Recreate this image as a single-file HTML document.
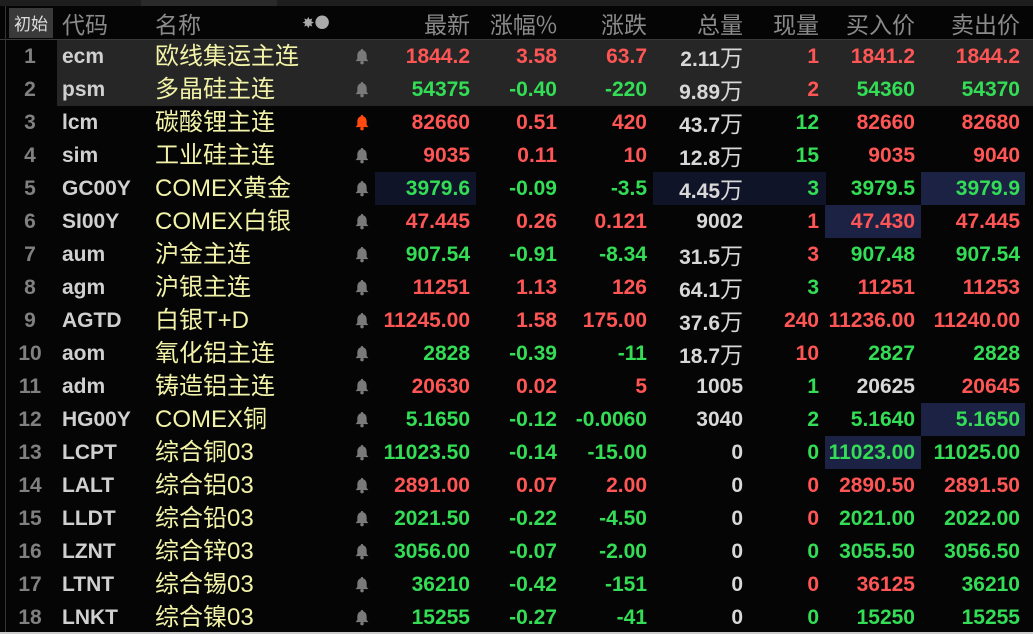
<!DOCTYPE html><html><head><meta charset="utf-8"><style>
body{margin:0;width:1033px;height:634px;background:#050505;overflow:hidden;position:relative;font-family:"Liberation Sans","Noto Sans CJK SC",sans-serif}
.a{position:absolute;white-space:nowrap;line-height:33px;height:33px}
.h{position:absolute;top:7px;height:32px;line-height:32px;font-size:23px;color:#8a8a8a;font-family:"Noto Sans CJK SC",sans-serif}
.n{font-size:21px;font-weight:bold;text-align:right}
.r{color:#ff5555}.g{color:#33dd55}.w{color:#d8d8d8}
.hl{position:absolute;background:#0f1428}
.hl2{position:absolute;background:#1b2244}
.bell{position:absolute;width:14px;height:17px}
</style></head><body>
<div style="position:absolute;left:0;top:0;width:1033px;height:6px;background:#1e1e1e"></div>
<div style="position:absolute;left:141px;top:0;width:136px;height:6px;background:#2a2a2a"></div>
<div style="position:absolute;left:0;top:39px;width:1033px;height:1px;background:#3a3a3a"></div>
<div style="position:absolute;left:5px;top:6px;width:1px;height:628px;background:#333"></div>
<div style="position:absolute;left:0;top:632px;width:1033px;height:2px;background:#ccc"></div>
<div style="position:absolute;left:9px;top:8px;width:44px;height:30px;background:#3a3a3a;color:#ddd;font-size:17px;line-height:30px;text-align:center;font-family:'Noto Sans CJK SC',sans-serif">初始</div>
<div class="h" style="left:62px">代码</div>
<div class="h" style="left:155px">名称</div>
<div class="h" style="left:302px;font-size:15px;color:#aaa">✸●</div>
<div class="h" style="right:563px">最新</div>
<div class="h" style="right:476px">涨幅%</div>
<div class="h" style="right:386px">涨跌</div>
<div class="h" style="right:290px">总量</div>
<div class="h" style="right:214px">现量</div>
<div class="h" style="right:118px">买入价</div>
<div class="h" style="right:13px">卖出价</div>
<div style="position:absolute;left:57px;top:40px;width:976px;height:66px;background:#262626"></div>
<div class="hl" style="left:375px;top:172px;width:101px;height:33px"></div>
<div class="hl" style="left:653px;top:172px;width:173px;height:33px"></div>
<div class="hl2" style="left:921px;top:172px;width:104px;height:33px"></div>
<div class="hl2" style="left:825px;top:205px;width:96px;height:33px"></div>
<div class="hl2" style="left:921px;top:403px;width:104px;height:33px"></div>
<div class="hl2" style="left:825px;top:436px;width:96px;height:33px"></div>
<div id="rows"></div>
<script>
const D=[
["ecm","欧线集运主连","r1844.2","r3.58","r63.7","2.11万","r1","r1841.2","r1844.2"],
["psm","多晶硅主连","g54375","g-0.40","g-220","9.89万","r2","g54360","g54370"],
["lcm","碳酸锂主连","r82660","r0.51","r420","43.7万","g12","r82660","r82680"],
["sim","工业硅主连","r9035","r0.11","r10","12.8万","g15","r9035","r9040"],
["GC00Y","COMEX黄金","g3979.6","g-0.09","g-3.5","4.45万","g3","g3979.5","g3979.9"],
["SI00Y","COMEX白银","r47.445","r0.26","r0.121","9002","r1","r47.430","r47.445"],
["aum","沪金主连","g907.54","g-0.91","g-8.34","31.5万","r3","g907.48","g907.54"],
["agm","沪银主连","r11251","r1.13","r126","64.1万","g3","r11251","r11253"],
["AGTD","白银T+D","r11245.00","r1.58","r175.00","37.6万","r240","r11236.00","r11240.00"],
["aom","氧化铝主连","g2828","g-0.39","g-11","18.7万","r10","g2827","g2828"],
["adm","铸造铝主连","r20630","r0.02","r5","1005","g1","w20625","r20645"],
["HG00Y","COMEX铜","g5.1650","g-0.12","g-0.0060","3040","g2","g5.1640","g5.1650"],
["LCPT","综合铜03","g11023.50","g-0.14","g-15.00","0","g0","g11023.00","g11025.00"],
["LALT","综合铝03","r2891.00","r0.07","r2.00","0","r0","r2890.50","r2891.50"],
["LLDT","综合铅03","g2021.50","g-0.22","g-4.50","0","r0","g2021.00","g2022.00"],
["LZNT","综合锌03","g3056.00","g-0.07","g-2.00","0","g0","g3055.50","g3056.50"],
["LTNT","综合锡03","g36210","g-0.42","g-151","0","r0","r36125","g36210"],
["LNKT","综合镍03","g15255","g-0.27","g-41","0","g0","g15250","g15255"]];
const R=[563,476,386,290,214,118,13];
let h="";
D.forEach((d,i)=>{const t=40+i*33;
h+=`<div class="a" style="top:${t}px;left:8px;width:44px;text-align:center;font-size:21px;font-weight:bold;color:#808080">${i+1}</div>`;
h+=`<div class="a" style="top:${t}px;left:62px;font-size:21px;font-weight:bold;color:#d0d0d0">${d[0]}</div>`;
h+=`<div class="a" style="top:${t}px;left:155px;font-size:24px;color:#f2f2a8;font-family:'Liberation Sans','Noto Sans CJK SC',sans-serif">${d[1]}</div>`;
const bc=i==2?"#ff4a10":"#7a7a7a";
h+=`<svg class="bell" style="left:355px;top:${t+8}px" viewBox="0 0 12 14"><path d="M6 0.5C6.6 .5 7 1 7 1.6C9.2 2.3 10 4 10 6.5V9L11.5 11H.5L2 9V6.5C2 4 2.8 2.3 5 1.6C5 1 5.4.5 6 .5Z" fill="${bc}"/><circle cx="6" cy="12.3" r="1.5" fill="${bc}"/></svg>`;
[2,3,4,5,6,7,8].forEach((k,j)=>{let v=d[k],c="w";if("rgw".includes(v[0])&&k!=5){c=v[0];v=v.slice(1)}
if(k==5&&v.endsWith("万")){v=v.slice(0,-1)+'<span style="font-weight:normal;font-family:\'Noto Sans CJK SC\',sans-serif;font-size:23px">万</span>'}
h+=`<div class="a n ${c}" style="top:${t}px;right:${R[j]}px">${v}</div>`;});
});
document.getElementById("rows").innerHTML=h;
</script>
</body></html>
